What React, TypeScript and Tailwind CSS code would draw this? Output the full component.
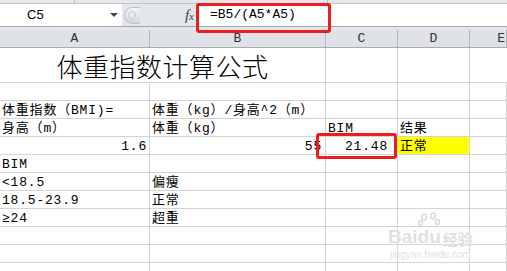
type Cell = { t?: string; right?: boolean; cls?: string };

const COLS = ["w-[150px]", "w-[176px]", "w-[72px]", "w-[72px]", "flex-1"];
const cellFont =
    "font-['Liberation_Mono','Noto_Sans_CJK_SC',monospace] text-[13px] leading-[15px] text-black [text-spacing-trim:space-all] tracking-[0.8px]";

const rows: Cell[][] = [
    [{}, {}, {}, {}, {}],
    [{ t: "体重指数（BMI)=" }, { t: "体重（kg）/身高^2（m）" }, {}, {}, {}],
    [{ t: "身高（m）" }, { t: "体重（kg）" }, { t: "BIM" }, { t: "结果" }, {}],
    [
        { t: "1.6", right: true, cls: "pr-[2px]" },
        { t: "55", right: true, cls: "pr-[3px]" },
        { t: "21.48", right: true, cls: "pr-[9px]" },
        { t: "正常", cls: "bg-[#ffff00]" },
        {},
    ],
    [{ t: "BIM" }, {}, {}, {}, {}],
    [{ t: "<18.5" }, { t: "偏瘦" }, {}, {}, {}],
    [{ t: "18.5-23.9" }, { t: "正常" }, {}, {}, {}],
    [{ t: "≥24" }, { t: "超重" }, {}, {}, {}],
    [{}, {}, {}, {}, {}],
    [{}, {}, {}, {}, {}],
    [{}, {}, {}, {}, {}],
];

function Row({ cells }: { cells: Cell[] }) {
    return (
        <div className="flex h-[18px]">
            {cells.map((c, i) => (
                <div
                    key={i}
                    className={`${COLS[i]} shrink-0 h-full border-r border-b border-[#d4d4d4] flex items-end whitespace-nowrap ${c.right ? "justify-end" : "justify-start pl-[2px]"} ${c.cls ?? ""} ${cellFont}`}
                >
                    {c.t}
                </div>
            ))}
        </div>
    );
}

function FormulaBar() {
    return (
        <div className="bg-[#e3e6ea] h-[30px] flex flex-col">
            {/* ribbon edge */}
            <div className="h-[4px] flex border-b border-[#c3c7cc]">
                <div className="w-[75px] border-r border-[#b9bdc2]" />
                <div className="w-[253px] border-r border-[#b9bdc2]" />
            </div>
            <div className="h-[23px] flex items-stretch border-b border-[#a6aab0]">
                {/* name box */}
                <div className="w-[122px] bg-white flex items-center justify-between pl-[27px] pr-[4px]">
                    <span className="font-['Liberation_Sans',sans-serif] text-[13px] text-black">C5</span>
                    <span className="w-0 h-0 border-l-[4px] border-r-[4px] border-t-[4px] border-l-transparent border-r-transparent border-t-[#444]" />
                </div>
                {/* splitter + fx */}
                <div className="w-[74px] flex items-center justify-between pr-[2px]">
                    <div className="ml-[2px] w-[16px] h-[17px] rounded-l-full bg-gradient-to-b from-[#f4f5f7] to-[#d3d7dc] border border-[#bfc3c8] border-r-0 flex items-center pl-[3px]">
                        <div className="w-[8px] h-[8px] rounded-full bg-[#e9ebee] border border-[#c6c9cd]" />
                    </div>
                    <span className="font-['Liberation_Serif',serif] italic text-[15px] text-[#444] leading-none">
                        f<span className="text-[11px]">x</span>
                    </span>
                </div>
                {/* formula input */}
                <div className="flex-1 bg-white border-l border-[#b9bdc2] flex items-center pl-[13px]">
                    <span className="font-['Liberation_Mono',monospace] text-[13px] text-black">=B5/(A5*A5)</span>
                </div>
            </div>
        </div>
    );
}

function Watermark() {
    const ink = "text-[#e0e0e0] [text-shadow:0_0_1px_#fff]";
    return (
        <div className="absolute left-[388px] top-[212px] flex flex-col items-center select-none">
            <div className="flex items-end">
                <span className={`font-['Liberation_Sans',sans-serif] font-bold text-[19px] leading-none ${ink}`}>Bai</span>
                <div className="flex flex-col items-center">
                    <svg width="22" height="16" viewBox="0 0 22 16" className="mb-[-1px]">
                        <g fill="none" stroke="#dcdcdc" strokeWidth="1.6">
                            <ellipse cx="6" cy="5" rx="2.3" ry="3" />
                            <ellipse cx="15" cy="4" rx="2.3" ry="3" />
                            <ellipse cx="2.5" cy="11" rx="2" ry="2.4" />
                            <ellipse cx="19.5" cy="10" rx="2" ry="2.4" />
                        </g>
                    </svg>
                    <span className={`font-['Liberation_Sans',sans-serif] font-bold text-[19px] leading-none ${ink}`}>du</span>
                </div>
                <span className={`ml-[2px] font-['Noto_Sans_CJK_SC',sans-serif] font-bold text-[15px] leading-none ${ink}`}>经验</span>
            </div>
            <span className={`mt-[4px] font-['Liberation_Sans',sans-serif] text-[10px] leading-none ${ink}`}>jingyan.baidu.com</span>
        </div>
    );
}

export default function App() {
    return (
        <div className="relative w-[507px] h-[271px] overflow-hidden bg-white">
            <FormulaBar />

            {/* column headers */}
            <div className="flex h-[18px] bg-[#dfe2e6] border-b border-[#a8abb0]">
                {["A", "B", "C", "D", "E"].map((h, i) => (
                    <div
                        key={h}
                        className={`${COLS[i]} shrink-0 border-r border-[#b3b6ba] flex items-center ${i === 4 ? "justify-end pr-[1px]" : "justify-center"} font-['Liberation_Mono',monospace] text-[13px] text-[#333]`}
                    >
                        {h}
                    </div>
                ))}
            </div>

            {/* title row, A1:B1 merged */}
            <div className="flex h-[35px]">
                <div className="w-[326px] shrink-0 border-r border-b border-[#d4d4d4] flex items-end justify-center pb-[1px] font-['Noto_Sans_CJK_SC',sans-serif] font-light text-[26px] leading-[30px] text-black tracking-[0.5px]">
                    体重指数计算公式
                </div>
                <div className="w-[72px] shrink-0 border-r border-b border-[#d4d4d4]" />
                <div className="w-[72px] shrink-0 border-r border-b border-[#d4d4d4]" />
                <div className="flex-1 border-b border-[#d4d4d4]" />
            </div>

            {rows.map((r, i) => (
                <Row key={i} cells={r} />
            ))}

            {/* annotation boxes */}
            <div className="absolute left-[196px] top-[3px] w-[135px] h-[30px] border-[3px] border-[#ee1d1d] rounded-[3px]" />
            <div className="absolute left-[316px] top-[133px] w-[81px] h-[26px] border-[3px] border-[#ee1d1d] rounded-[3px]" />

            <Watermark />
        </div>
    );
}
